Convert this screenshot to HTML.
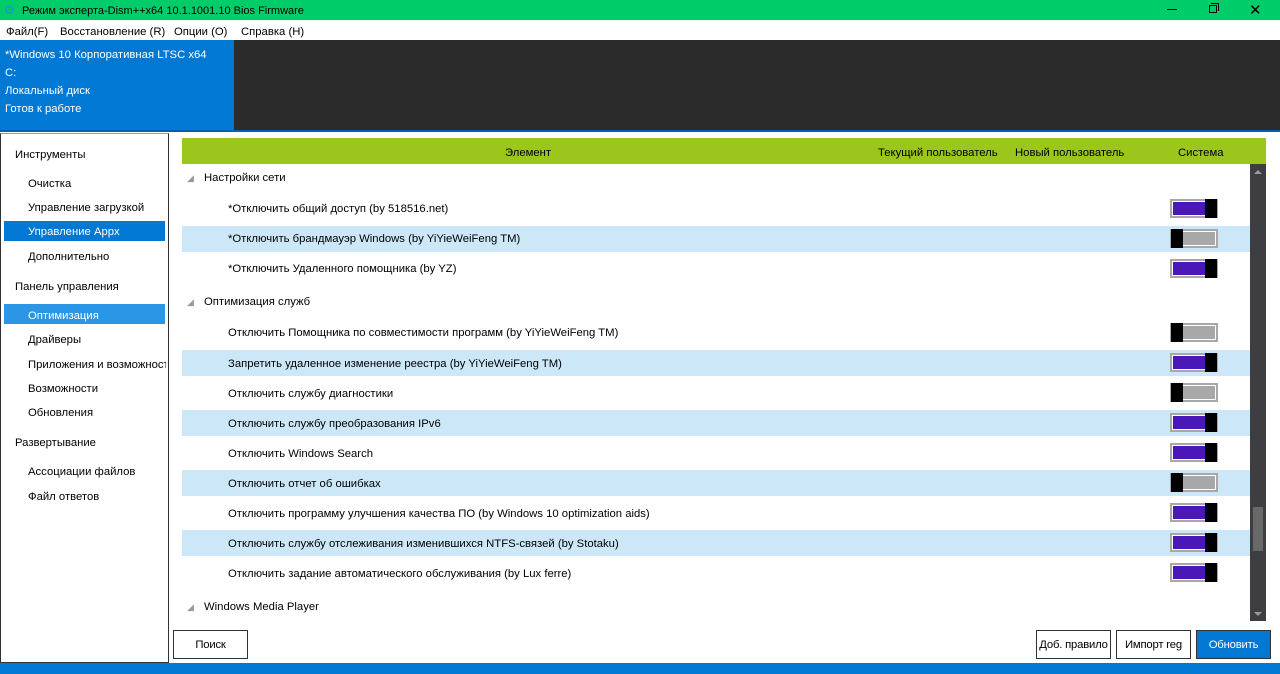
<!DOCTYPE html>
<html><head><meta charset="utf-8"><style>
*{margin:0;padding:0;box-sizing:border-box}
body{width:1280px;height:674px;overflow:hidden;background:#fff;font-family:"Liberation Sans",sans-serif;font-size:11.3px;color:#000;position:relative}
.a{position:absolute}
.t{white-space:nowrap;margin-top:2px}
.tog{position:absolute;left:1170px;width:48px;height:19px;border:2px solid #a8a8a8;background:#fff}
.tog i{position:absolute;top:0;bottom:0}
.on i.f{left:1px;right:11px;top:1px;bottom:1px;background:#4a17b8}
.on i.k{right:-1px;width:12px;top:-2px;bottom:-2px;background:#000}
.off i.f{left:11px;right:1px;top:1px;bottom:1px;background:#a8a8a8}
.off i.k{left:-1px;width:12px;top:-2px;bottom:-2px;background:#000}
.hl{position:absolute;left:182px;width:1068px;height:26px;background:#cce8f8}
.btn{position:absolute;top:630px;height:29px;border:1px solid #333;background:#fff;text-align:center;line-height:29px;font-size:11.3px;white-space:nowrap;letter-spacing:-0.2px}
</style></head><body>
<div class="a" style="left:0;top:0;width:1280px;height:20px;background:#00cc6a"></div>
<div class="a" style="left:4px;top:3px;color:#1e90d8;font-size:12px">⚙</div>
<div class="a t" style="left:22px;top:3px;font-size:11px">Режим эксперта-Dism++x64 10.1.1001.10 Bios Firmware</div>
<div class="a" style="left:1167px;top:9px;width:10px;height:1px;background:#000"></div>
<div class="a" style="left:1209px;top:5px;width:8px;height:8px;border:1px solid #000"></div>
<div class="a" style="left:1211px;top:3px;width:8px;height:8px;border-top:1px solid #000;border-right:1px solid #000"></div>
<div class="a" style="left:1249px;top:1px;font-size:15px">✕</div>
<div class="a t" style="left:6px;top:24px">Файл(F)</div>
<div class="a t" style="left:60px;top:24px">Восстановление (R)</div>
<div class="a t" style="left:174px;top:24px">Опции (O)</div>
<div class="a t" style="left:241px;top:24px">Справка (H)</div>
<div class="a" style="left:0;top:40px;width:234px;height:91px;background:#0078d4"></div>
<div class="a" style="left:234px;top:40px;width:1046px;height:91px;background:#2b2b2b"></div>
<div class="a" style="left:0;top:130px;width:1280px;height:2px;background:#0a5fa8"></div>
<div class="a t" style="left:5px;top:47px;color:#fff">*Windows 10 Корпоративная LTSC x64</div>
<div class="a t" style="left:5px;top:65px;color:#fff">C:</div>
<div class="a t" style="left:5px;top:83px;color:#fff">Локальный диск</div>
<div class="a t" style="left:5px;top:101px;color:#fff">Готов к работе</div>
<div class="a" style="left:0;top:133px;width:169px;height:530px;border:1px solid #333;border-top:1px solid #999"></div>
<div class="a" style="left:4px;top:221px;width:161px;height:20px;background:#0078d4"></div>
<div class="a" style="left:4px;top:304px;width:161px;height:20px;background:#2b95e6"></div>
<div class="a t" style="left:15px;top:147px">Инструменты</div>
<div class="a t" style="left:28px;top:176px">Очистка</div>
<div class="a t" style="left:28px;top:200px">Управление загрузкой</div>
<div class="a t" style="left:28px;top:224px;color:#fff">Управление Appx</div>
<div class="a t" style="left:28px;top:249px">Дополнительно</div>
<div class="a t" style="left:15px;top:279px">Панель управления</div>
<div class="a t" style="left:28px;top:308px;color:#fff">Оптимизация</div>
<div class="a t" style="left:28px;top:332px">Драйверы</div>
<div class="a t" style="left:28px;top:357px;width:138px;overflow:hidden">Приложения и возможности</div>
<div class="a t" style="left:28px;top:381px">Возможности</div>
<div class="a t" style="left:28px;top:405px">Обновления</div>
<div class="a t" style="left:15px;top:435px">Развертывание</div>
<div class="a t" style="left:28px;top:464px">Ассоциации файлов</div>
<div class="a t" style="left:28px;top:489px">Файл ответов</div>
<div class="a" style="left:182px;top:138px;width:1084px;height:26px;background:#9bc61b"></div>
<div class="a t" style="left:505px;top:145px">Элемент</div>
<div class="a t" style="left:878px;top:145px">Текущий пользователь</div>
<div class="a t" style="left:1015px;top:145px">Новый пользователь</div>
<div class="a t" style="left:1178px;top:145px">Система</div>
<div class="a" style="left:1250px;top:164px;width:16px;height:457px;background:#3e3e42"></div>
<div class="a" style="left:1253px;top:507px;width:10px;height:44px;background:#686868"></div>
<div class="a" style="left:1254px;top:170px;border:4px solid transparent;border-bottom:4px solid #999;border-top:0"></div>
<div class="a" style="left:1254px;top:612px;border:4px solid transparent;border-top:4px solid #999;border-bottom:0"></div>
<div class="hl" style="top:226px"></div>
<div class="hl" style="top:350px"></div>
<div class="hl" style="top:410px"></div>
<div class="hl" style="top:470px"></div>
<div class="hl" style="top:530px"></div>
<div class="a t" style="left:187px;top:171px;color:#999;font-size:9px">◢</div>
<div class="a t" style="left:204px;top:170px">Настройки сети</div>
<div class="a t" style="left:187px;top:295px;color:#999;font-size:9px">◢</div>
<div class="a t" style="left:204px;top:294px">Оптимизация служб</div>
<div class="a t" style="left:187px;top:600px;color:#999;font-size:9px">◢</div>
<div class="a t" style="left:204px;top:599px">Windows Media Player</div>
<div class="a t" style="left:228px;top:201px">*Отключить общий доступ (by 518516.net)</div>
<div class="a t" style="left:228px;top:231px">*Отключить брандмауэр Windows (by YiYieWeiFeng TM)</div>
<div class="a t" style="left:228px;top:261px">*Отключить Удаленного помощника (by YZ)</div>
<div class="a t" style="left:228px;top:325px">Отключить Помощника по совместимости программ (by YiYieWeiFeng TM)</div>
<div class="a t" style="left:228px;top:356px">Запретить удаленное изменение реестра (by YiYieWeiFeng TM)</div>
<div class="a t" style="left:228px;top:386px">Отключить службу диагностики</div>
<div class="a t" style="left:228px;top:416px">Отключить службу преобразования IPv6</div>
<div class="a t" style="left:228px;top:446px">Отключить Windows Search</div>
<div class="a t" style="left:228px;top:476px">Отключить отчет об ошибках</div>
<div class="a t" style="left:228px;top:506px">Отключить программу улучшения качества ПО (by Windows 10 optimization aids)</div>
<div class="a t" style="left:228px;top:536px">Отключить службу отслеживания изменившихся NTFS-связей (by Stotaku)</div>
<div class="a t" style="left:228px;top:566px">Отключить задание автоматического обслуживания (by Lux ferre)</div>
<div class="tog on" style="top:199px"><i class="f"></i><i class="k"></i></div>
<div class="tog off" style="top:229px"><i class="f"></i><i class="k"></i></div>
<div class="tog on" style="top:259px"><i class="f"></i><i class="k"></i></div>
<div class="tog off" style="top:323px"><i class="f"></i><i class="k"></i></div>
<div class="tog on" style="top:353px"><i class="f"></i><i class="k"></i></div>
<div class="tog off" style="top:383px"><i class="f"></i><i class="k"></i></div>
<div class="tog on" style="top:413px"><i class="f"></i><i class="k"></i></div>
<div class="tog on" style="top:443px"><i class="f"></i><i class="k"></i></div>
<div class="tog off" style="top:473px"><i class="f"></i><i class="k"></i></div>
<div class="tog on" style="top:503px"><i class="f"></i><i class="k"></i></div>
<div class="tog on" style="top:533px"><i class="f"></i><i class="k"></i></div>
<div class="tog on" style="top:563px"><i class="f"></i><i class="k"></i></div>
<div class="btn" style="left:173px;width:75px">Поиск</div>
<div class="btn" style="left:1036px;width:75px">Доб. правило</div>
<div class="btn" style="left:1116px;width:75px">Импорт reg</div>
<div class="btn" style="left:1196px;width:75px;background:#0078d4;color:#fff;border-color:#333">Обновить</div>
<div class="a" style="left:0;top:663px;width:1280px;height:11px;background:#0078d4"></div>
</body></html>
